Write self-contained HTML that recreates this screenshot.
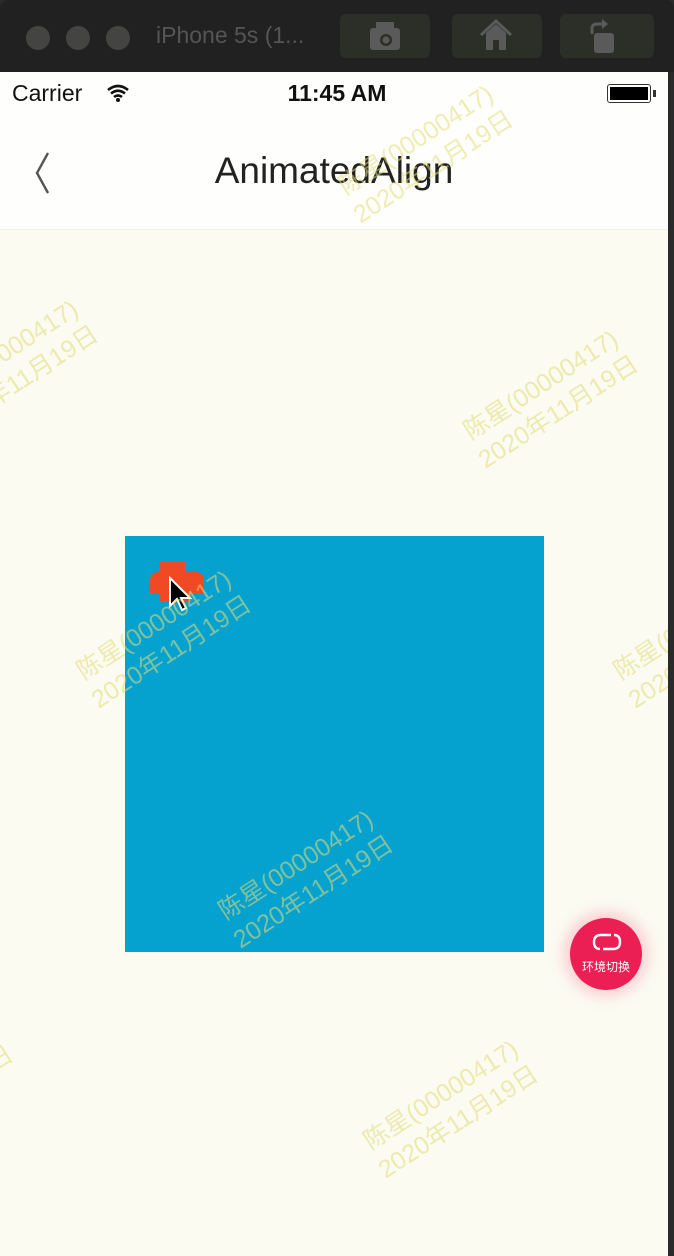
<!DOCTYPE html>
<html><head><meta charset="utf-8"><style>
*{margin:0;padding:0;box-sizing:border-box}
html,body{width:674px;height:1256px;overflow:hidden}
body{background:#2a2a2a;font-family:"Liberation Sans","Noto Sans CJK SC",sans-serif;position:relative}
.tb{position:absolute;left:0;top:0;width:674px;height:72px;background:#212121;border-radius:8px 8px 0 0}
.dot{position:absolute;top:26px;width:24px;height:24px;border-radius:50%;background:#444442}
.btn{position:absolute;top:14px;height:44px;width:90px;border-radius:6px;background:#2c2f28}
.ph{position:absolute;left:0;top:72px;width:668px;height:1184px;background:#fbfbf2;overflow:hidden}
.nav{position:absolute;left:0;top:0;width:668px;height:158px;background:#fefefc;border-bottom:1px solid #f0f0e6}
.wm{position:absolute;color:rgba(225,220,120,.55);font-size:25px;line-height:32px;transform:rotate(-33deg);transform-origin:left top;white-space:nowrap;text-align:center}
</style></head><body>
<div class="tb">
<div class="dot" style="left:26px"></div><div class="dot" style="left:66px"></div><div class="dot" style="left:106px"></div>
<div style="position:absolute;left:156px;top:22px;color:#555;font-size:23px">iPhone 5s (1...</div>
<div class="btn" style="left:340px"></div><div class="btn" style="left:452px"></div><div class="btn" style="left:560px;width:94px"></div>
<svg style="position:absolute;left:368px;top:18px" width="36" height="36" viewBox="0 0 36 36"><rect x="2" y="10" width="30" height="22" rx="3" fill="#5a5a5a"/><rect x="8" y="4" width="18" height="8" fill="#5a5a5a"/><circle cx="18" cy="22" r="6" fill="#2c2f28"/><circle cx="18" cy="22" r="3.5" fill="#5a5a5a"/></svg>
<svg style="position:absolute;left:478px;top:18px" width="36" height="34" viewBox="0 0 36 34"><path d="M3 17L18 3L33 17" stroke="#5a5a5a" stroke-width="3" fill="none"/><path d="M8 15V32H15V22H21V32H28V15L18 6Z" fill="#5a5a5a"/></svg>
<svg style="position:absolute;left:588px;top:18px" width="30" height="36" viewBox="0 0 30 36"><rect x="6" y="15" width="20" height="20" rx="3" fill="#5a5a5a"/><path d="M4 16V10Q4 6 10 6H16" stroke="#5a5a5a" stroke-width="3" fill="none"/><path d="M14 1L20 6L14 11Z" fill="#5a5a5a"/></svg>
</div>
<div class="ph">
<div class="nav">
<div style="position:absolute;left:12px;top:8px;font-size:23px;color:#111">Carrier</div>
<svg style="position:absolute;left:106px;top:12px" width="24" height="18" viewBox="0 0 24 18"><path d="M2 6Q12-2 22 6M5 9.5Q12 4 19 9.5M8 13Q12 10 16 13" stroke="#111" stroke-width="2.6" fill="none"/><circle cx="12" cy="16" r="2" fill="#111"/></svg>
<div style="position:absolute;left:0;width:674px;top:8px;text-align:center;font-size:23px;font-weight:bold;color:#111">11:45 AM</div>
<div style="position:absolute;left:607px;top:12px;width:44px;height:19px;border:1.5px solid #333;border-radius:3px;padding:2px"><div style="width:100%;height:100%;background:#000"></div></div>
<div style="position:absolute;left:653px;top:18px;width:3px;height:7px;background:#333"></div>
<svg style="position:absolute;left:28px;top:78px" width="30" height="46" viewBox="0 0 30 46"><path d="M20 3L9 23L20 43" stroke="#555" stroke-width="2.4" fill="none"/></svg>
<div style="position:absolute;left:0;width:668px;top:78px;text-align:center;font-size:37px;color:#222">AnimatedAlign</div>
</div>
<div style="position:absolute;left:125px;top:464px;width:419px;height:416px;background:#05a1cf"></div>
<div style="position:absolute;left:160px;top:490px;width:26px;height:10px;background:#f04a25"></div>
<div style="position:absolute;left:150px;top:500px;width:54px;height:22px;background:#f04a25;border-radius:8px 8px 0 0"></div>
<div style="position:absolute;left:160px;top:518px;width:30px;height:12px;background:#f04a25"></div>
<svg style="position:absolute;left:168px;top:504px" width="26" height="36" viewBox="0 0 26 36"><path d="M2 2V30L9 23L14 34L18 32L13 22H22Z" fill="#000" stroke="#fff" stroke-width="2"/></svg>
<div style="position:absolute;left:570px;top:846px;width:72px;height:72px;border-radius:50%;background:#ec1f55;box-shadow:0 0 14px 6px rgba(250,120,150,.35)"></div>
<svg style="position:absolute;left:591px;top:858px" width="32" height="24" viewBox="0 0 32 24"><path d="M9 19Q3 19 3 12Q3 5 10 5H20M23 5Q29 5 29 12Q29 19 22 19H12" stroke="#fff" stroke-width="2.4" fill="none"/></svg>
<div style="position:absolute;left:570px;top:886px;width:72px;text-align:center;color:#fff;font-size:12px">环境切换</div>
<div class="wm" style="left:330px;top:105px">陈星(00000417)<br>2020年11月19日</div>
<div class="wm" style="left:-85px;top:320px">陈星(00000417)<br>2020年11月19日</div>
<div class="wm" style="left:455px;top:350px">陈星(00000417)<br>2020年11月19日</div>
<div class="wm" style="left:68px;top:590px">陈星(00000417)<br>2020年11月19日</div>
<div class="wm" style="left:605px;top:590px">陈星(00000417)<br>2020年11月19日</div>
<div class="wm" style="left:210px;top:830px">陈星(00000417)<br>2020年11月19日</div>
<div class="wm" style="left:-170px;top:1040px">陈星(00000417)<br>2020年11月19日</div>
<div class="wm" style="left:355px;top:1060px">陈星(00000417)<br>2020年11月19日</div>
</div>
</body></html>
